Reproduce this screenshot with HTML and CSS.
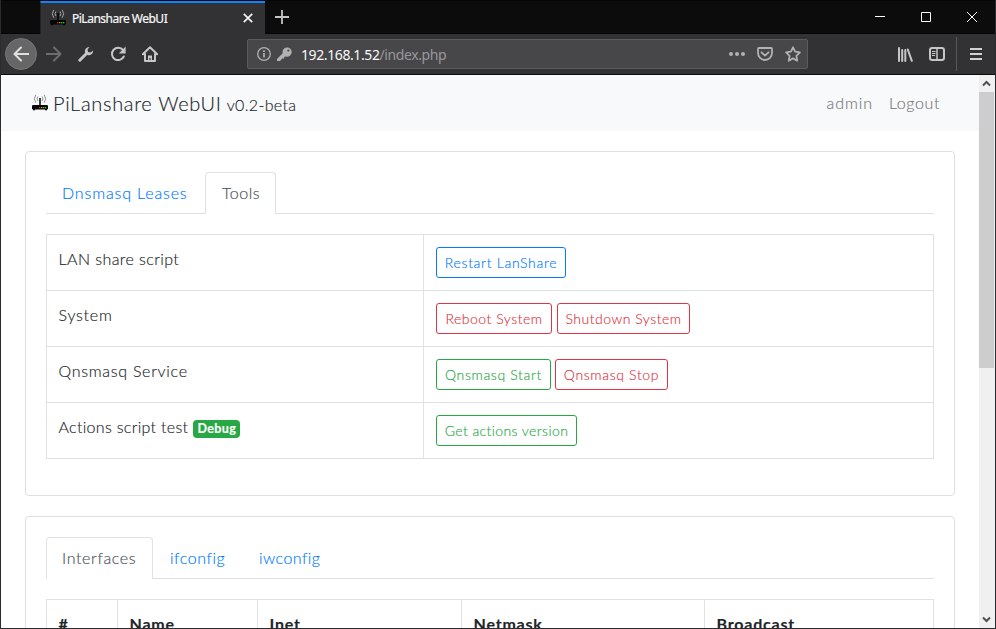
FILE: index.html
```
<!DOCTYPE html>
<html lang="en">
<head>
<meta charset="utf-8">
<title>PiLanshare WebUI</title>
<link rel="stylesheet" href="styles.css">
</head>
<body>
<svg class="defs" aria-hidden="true">
  <symbol id="router" viewBox="0 0 16 17">
    <rect x="0" y="11" width="16" height="4.500" rx="1.200" fill="#050505"/>
    <rect x="1" y="15" width="2" height="1.300" fill="#050505"/><rect x="13" y="15" width="2" height="1.300" fill="#050505"/>
    <path d="M8 4v8" stroke="#050505" stroke-width="1.500"/>
    <path d="M5.900 2.500q-1.600 2.300 0 4.600M10.100 2.500q1.600 2.300 0 4.600M3.800.8q-3 4 0 8M12.200.8q3 4 0 8" fill="none" stroke="currentColor" stroke-width=".9"/>
    <rect x="7" y="13" width="1.300" height="1.300" fill="#e22"/><rect x="9" y="13" width="1.300" height="1.300" fill="#e80"/><rect x="11" y="13" width="1.300" height="1.300" fill="#2d2"/><rect x="13" y="13" width="1.300" height="1.300" fill="#2d2"/>
  </symbol>
</svg>
<div class="window">
  <header class="titlebar">
    <div class="tab">
      <svg class="favicon" width="16" height="17"><use href="#router"/></svg>
      <span class="tab-title">PiLanshare WebUI</span>
      <svg class="tab-close" width="10" height="10" viewBox="0 0 10 10"><path d="M.8.8l8.400 8.400M9.200.8L.8 9.200" stroke="#f4f4f4" stroke-width="1.700"/></svg>
    </div>
    <svg class="new-tab" width="14" height="14" viewBox="0 0 14 14"><path d="M7 0v14M0 7h14" stroke="#c4c4c5" stroke-width="1.800"/></svg>
    <div class="controls">
      <svg width="10" height="10"><path d="M0 4.500h10" stroke="#fff"/></svg>
      <svg width="10" height="10"><path d="M.5.5h9v9h-9z" fill="none" stroke="#fff"/></svg>
      <svg width="10" height="10"><path d="M0 0l10 10M10 0L0 10" stroke="#fff"/></svg>
    </div>
  </header>
  <div class="toolbar">
    <div class="back"><svg width="16" height="16" viewBox="0 0 16 16"><path d="M15.500 8H1.500M8 1.500L1.500 8 8 14.500" class="stroke"/></svg></div>
    <svg class="tool forward" width="16" height="16" viewBox="0 0 16 16"><path d="M.5 8h14M8 1.500L14.500 8 8 14.500" class="stroke"/></svg>
    <svg class="tool" width="16" height="16" viewBox="0 0 16 16"><path d="M1.800 14.200L9 7" class="stroke wide"/><path d="M11.500.9A4.400 4.400 0 0 0 7 6.500L9.500 9a4.400 4.400 0 0 0 5.600-4.500l-2.600 2-2.500-.5-.5-2.500z" fill="#c6c6c7"/></svg>
    <svg class="tool" width="16" height="16" viewBox="0 0 16 16"><path d="M13 4A6.200 6.200 0 1 0 13.800 10.500" class="stroke"/><path d="M15.600.6v6.800H8.800z" fill="#c6c6c7"/></svg>
    <svg class="tool" width="16" height="16" viewBox="0 0 16 16"><path d="M.8 8.300L8 1.200l7.200 7.100M3 8v7h10V8" class="stroke"/><path d="M6 15V9.500h4V15H8.600v-3H7.400v3z" fill="#c6c6c7"/></svg>
    <div class="urlbar">
      <svg width="14" height="14" viewBox="0 0 14 14"><circle cx="7" cy="7" r="6.300" fill="none" stroke="#b1b1b3" stroke-width="1.300"/><path d="M7 6v4.600M7 3.200v1.700" stroke="#b1b1b3" stroke-width="1.700"/></svg>
      <svg class="key" width="15" height="15" viewBox="0 0 15 15"><path d="M0 14V12l5.700-5.700a4.600 4.600 0 1 1 3.300 3.200L7.500 9.800 7 11.500H5.300L3 14z" fill="#b1b1b3"/><circle cx="11.300" cy="3.500" r="1.100" fill="#474749"/></svg>
      <span class="url"><b>192.168.1.52</b>/index.php</span>
      <svg class="dots" width="16" height="16"><g fill="#b1b1b3"><circle cx="2" cy="8" r="2"/><circle cx="8" cy="8" r="2"/><circle cx="14" cy="8" r="2"/></g></svg>
      <svg class="pocket" width="16" height="14" viewBox="0 0 16 14"><path d="M2 1h12a1 1 0 0 1 1 1v4a7 7 0 0 1-14 0V2a1 1 0 0 1 1-1z" class="stroke dim"/><path d="M4.500 5.300L8 8.600l3.500-3.300" class="stroke dim"/></svg>
      <svg width="16" height="16" viewBox="0 0 16 16"><path d="M8 1.300l2.100 4.400 4.800.7-3.500 3.400.8 4.900L8 12.400l-4.200 2.300.8-4.900L1.100 6.400l4.800-.7z" class="stroke dim"/></svg>
    </div>
    <div class="tools-right">
      <svg width="16" height="15" viewBox="0 0 16 15"><path d="M2 1v13M5.200 3v11M8.300 3v11M10.800 2.500L14.800 13.800" class="stroke"/></svg>
      <svg width="16" height="14" viewBox="0 0 16 14"><rect x="1" y="1" width="14" height="12" rx="2.200" class="stroke"/><path d="M8 1v12" stroke="#c6c6c7" stroke-width="1.500"/><path d="M3 4.500h3.500M3 6.500h3.500M3 8.500h3" stroke="#c6c6c7"/></svg>
    </div>
    <div class="menu"><svg width="12" height="12"><path d="M0 1h12M0 6h12M0 11h12" stroke="#d2d2d3" stroke-width="2"/></svg></div>
  </div>
  <div class="viewport">
    <main class="page">
      <nav class="navbar">
        <svg class="logo" width="16" height="17"><use href="#router"/></svg>
        <span class="brand">PiLanshare WebUI</span>
        <span class="version">v0.2-beta</span>
        <a class="user">admin</a>
        <a class="logout">Logout</a>
      </nav>
      <section class="card">
        <div class="tabs">
          <a class="nav-tab leases">Dnsmasq Leases</a>
          <a class="nav-tab active tools">Tools</a>
        </div>
        <table class="actions">
          <tr><td><span class="t-lan">LAN share script</span></td><td><div class="buttons"><button class="btn blue restart">Restart LanShare</button></div></td></tr>
          <tr><td><span class="t-sys">System</span></td><td><div class="buttons"><button class="btn red reboot">Reboot System</button><button class="btn red shutdown">Shutdown System</button></div></td></tr>
          <tr><td><span class="t-svc">Qnsmasq Service</span></td><td><div class="buttons"><button class="btn green start">Qnsmasq Start</button><button class="btn red stop">Qnsmasq Stop</button></div></td></tr>
          <tr><td><span class="t-act">Actions script test</span><span class="badge">Debug</span></td><td><div class="buttons"><button class="btn green getver">Get actions version</button></div></td></tr>
        </table>
      </section>
      <section class="card">
        <div class="tabs">
          <a class="nav-tab active interfaces">Interfaces</a>
          <a class="nav-tab ifconfig">ifconfig</a>
          <a class="nav-tab iwconfig">iwconfig</a>
        </div>
        <table class="ifaces">
          <tr><th>#</th><th>Name</th><th>Inet</th><th>Netmask</th><th>Broadcast</th></tr>
        </table>
      </section>
    </main>
    <div class="scrollbar">
      <svg class="arrow" width="15" height="17"><path d="M4 10.500L7.500 7l3.500 3.500" fill="none" stroke="#505050" stroke-width="2"/></svg>
      <div class="thumb"></div>
      <svg class="arrow" width="15" height="17"><path d="M4 6.500L7.500 10 11 6.500" fill="none" stroke="#505050" stroke-width="2"/></svg>
    </div>
  </div>
</div>
</body>
</html>
```
FILE: styles.css
```
* { box-sizing: border-box; }
body { margin: 0; overflow: hidden; }
svg { display: block; flex: none; }
.defs { display: none; }
.window {
  width: 996px; height: 629px; display: flex; flex-direction: column;
  border: 1px solid #2b2b2e; border-top: 0; background: #fff;
  font-family: "Noto Sans", sans-serif;
}
.stroke { fill: none; stroke: #c6c6c7; stroke-width: 2; stroke-linecap: round; stroke-linejoin: round; }
.wide { stroke-width: 3; }
.dim { stroke: #b1b1b3; stroke-width: 1.8; }

.titlebar { height: 34px; display: flex; background: #0c0c0c; border-top: 1px solid #050505; border-bottom: 1px solid #050505; flex: none; }
.tab { width: 225px; height: 33px; margin-left: 39px; padding: 0 12px 0 9px; display: flex; align-items: center; background: #323234; border-top: 2px solid #0a84ff; border-left: 1px solid #222; flex: none; }
.favicon { color: #aaa; margin-top: -2px; }
.tab-title { margin-left: 6px; flex: 1; font-size: 12px; letter-spacing: -0.5px; color: #f9f9fa; white-space: nowrap; -webkit-text-stroke: .2px; }
.tab-close { margin-top: -2px; }
.new-tab { margin: 9px 0 0 10px; }
.controls { display: flex; gap: 36px; margin: 11px 18px 0 auto; }

.toolbar { height: 41px; display: flex; align-items: center; background: #323234; border-bottom: 1px solid #0c0c0d; flex: none; }
.back { width: 32px; height: 32px; margin-left: 4px; border: 1px solid #767677; border-radius: 50%; background: #666667; display: flex; align-items: center; justify-content: center; flex: none; }
.back .stroke { stroke: #e0e0e1; }
.tool { margin-left: 16px; }
.forward { margin-left: 9px; opacity: .4; }
.urlbar { width: 561px; height: 30px; margin-left: 89px; padding: 0 6px 0 9px; display: flex; align-items: center; background: #474749; border: 1px solid #5b5b5d; border-radius: 2px; flex: none; }
.key { margin-left: 6px; }
.url { margin-left: 9px; margin-right: auto; font-size: 14px; letter-spacing: -0.4px; color: #98989b; }
.url b { font-weight: 400; color: #f9f9fa; }
.dots, .pocket { margin-right: 12px; }
.tools-right { display: flex; gap: 16px; margin-left: 89px; align-items: center; }
.menu { height: 34px; margin-left: 11px; padding-left: 13px; border-left: 1px solid #58585a; display: flex; align-items: center; }

.viewport { flex: 1; min-height: 0; display: flex; overflow: hidden; }
.page { width: 978px; overflow: hidden; font-family: Lato, sans-serif; font-weight: 300; font-size: 16px; line-height: 24px; color: #212529; -webkit-text-stroke: .15px; }
.navbar { height: 56px; padding: 0 39px 0 31px; display: flex; align-items: center; background: #f8f9fa; white-space: nowrap; }
.logo { color: #888; margin-top: -2px; }
.brand { margin-left: 5px; font-size: 20px; letter-spacing: .68px; }
.version { margin: 3px auto 0 5px; font-size: 16px; letter-spacing: .35px; }
.user, .logout { color: #77787a; }
.user { letter-spacing: .9px; }
.logout { margin-left: 16px; letter-spacing: .6px; }

.card { margin: 20px 24px 0; padding: 20px 20px 36px; border: 1px solid #dfdfdf; border-radius: 4px; }
.tabs { height: 42px; display: flex; border-bottom: 1px solid #dee2e6; }
.nav-tab { height: 42px; padding: 8px 0 0 15px; border: 1px solid transparent; border-bottom: 0; color: #007bff; white-space: nowrap; flex: none; }
.active { color: #495057; background: #fff; border-color: #dee2e6; border-radius: 4px 4px 0 0; }
.leases { width: 159px; letter-spacing: .86px; }
.tools { width: 71px; letter-spacing: .5px; padding-left: 16px; }
.interfaces { width: 107px; letter-spacing: .64px; }
.ifconfig { width: 89px; letter-spacing: .55px; padding-left: 16px; }
.iwconfig { width: 95px; letter-spacing: .45px; padding-left: 16px; }

table { width: 100%; margin-top: 20px; border-collapse: collapse; table-layout: fixed; }
td, th { border: 1px solid #dee2e6; padding: 12px; text-align: left; vertical-align: top; }
td { height: 56px; }
.actions td:first-child { width: 377px; white-space: nowrap; padding-left: 11.5px; }
.t-lan { letter-spacing: .42px; }
.t-sys { letter-spacing: .75px; }
.t-svc { letter-spacing: .72px; }
.t-act { letter-spacing: .31px; }
.badge { display: inline-block; margin-left: 5px; width: 47px; height: 18px; line-height: 18px; border-radius: 4px; background: #28a745; color: #fff; font-size: 12.5px; font-weight: 700; text-align: center; vertical-align: 0; letter-spacing: .4px; }
.buttons { display: flex; }
.btn { height: 31px; padding: 0; border: 1px solid; border-radius: 3px; background: #fff; font: 300 14px/21px Lato, sans-serif; letter-spacing: .5px; white-space: nowrap; -webkit-text-stroke: .15px; }
.blue { color: #007bff; }
.red { color: #dc3545; }
.green { color: #28a745; }
.restart { width: 130px; letter-spacing: .68px; }
.reboot { width: 116px; margin-right: 5px; }
.shutdown { width: 133px; }
.start { width: 115px; margin-right: 4px; letter-spacing: .65px; }
.stop { width: 113px; letter-spacing: .65px; }
.getver { width: 141px; letter-spacing: .4px; }

th { font-weight: 700; letter-spacing: .8px; padding-left: 11.5px; }
th:nth-child(1) { width: 71px; }
th:nth-child(2) { width: 140px; }
th:nth-child(3) { width: 204px; }
th:nth-child(4) { width: 243px; }

.scrollbar { width: 16px; display: flex; flex-direction: column; background: #f0f0f0; flex: none; }
.thumb { height: 276px; width: 15px; margin-bottom: auto; background: #cdcdcd; }
```
